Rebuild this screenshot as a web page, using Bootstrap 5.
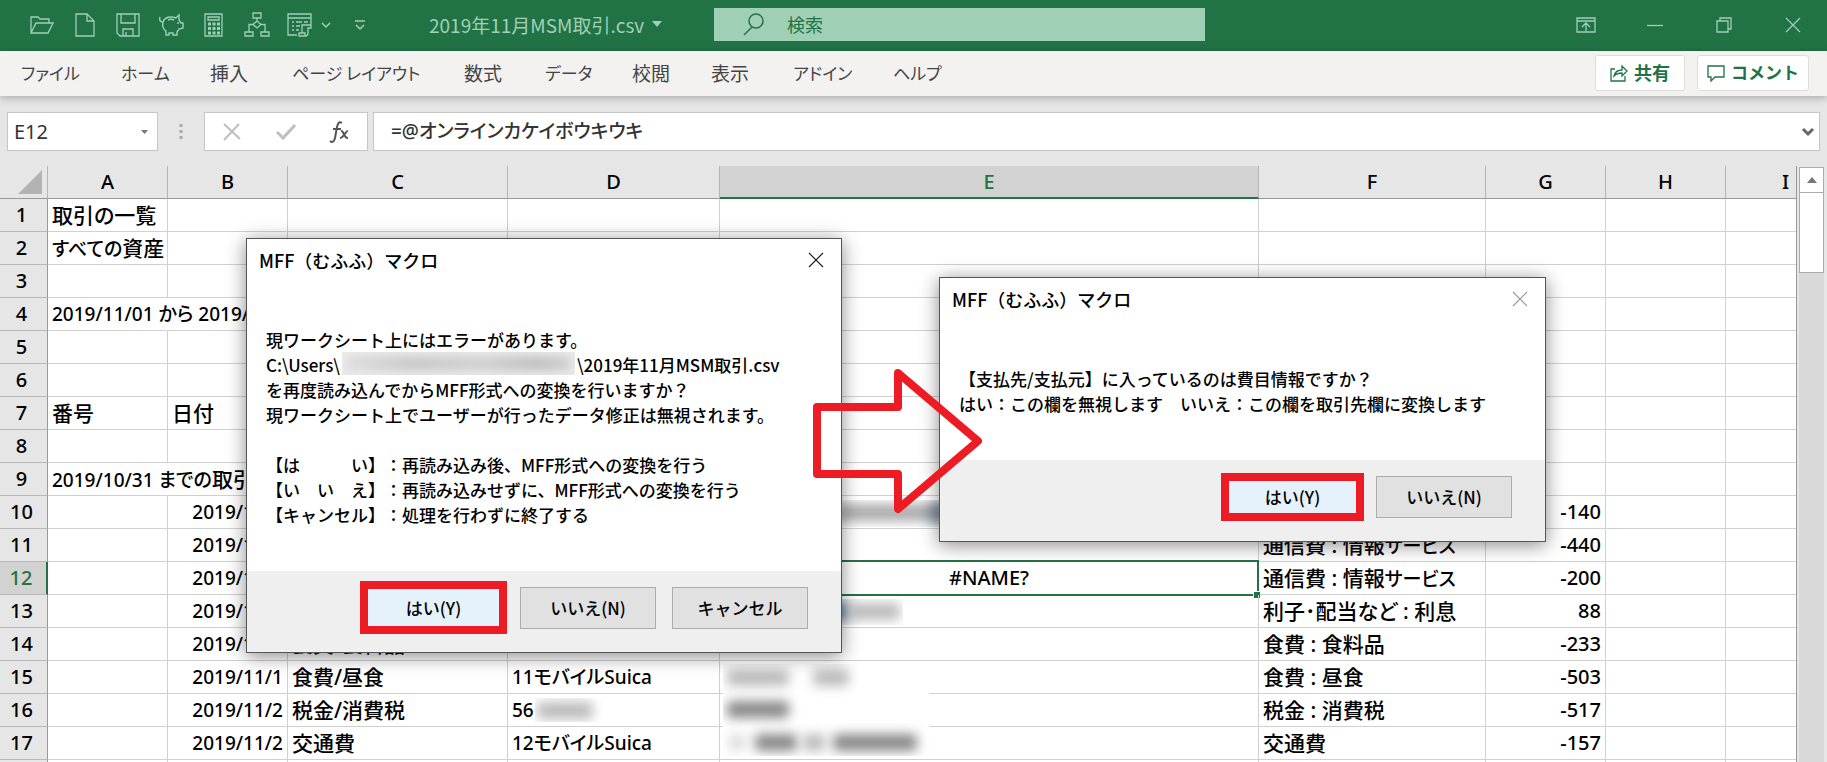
<!DOCTYPE html>
<html lang="ja">
<head>
<meta charset="utf-8">
<meta name="viewport" content="width=device-width, initial-scale=1">
<title>2019年11月MSM取引.csv</title>
<link href="https://cdn.jsdelivr.net/npm/bootstrap@5.3.0/dist/css/bootstrap.min.css" rel="stylesheet">
<script src="https://cdn.jsdelivr.net/npm/bootstrap@5.3.0/dist/js/bootstrap.bundle.min.js"></script>
<style>
:root{--xl:#217346;--mint:#9fd0b6;--line:#d0d0d0;--edge:#999}
body{font-family:"Noto Sans","Noto Sans CJK JP",sans-serif;font-feature-settings:"palt";font-size:20px;color:#000;background:#e6e6e6}
button{font-family:inherit}
svg{display:block;fill:none;stroke:currentColor;flex-shrink:0}
.titlebar{background:var(--xl);color:var(--mint);height:51px;padding-bottom:2px}
.tool{width:43px;height:49px;padding:0;border:0;background:none;color:inherit;display:flex;align-items:center;justify-content:center}
.tool.narrow{width:25px}
.tool.slim{width:10px}
.tool.wide{width:69px}
.quick{width:429px;padding-left:20px}
.docname{width:285px;font-family:"Noto Sans CJK JP",sans-serif;font-size:19px;line-height:24px;color:var(--mint)}
.search{background:var(--mint);height:33px;flex:0 1 491px;color:var(--xl);padding-left:29px}
.search input{background:none;border:0;outline:0;font-size:18px;line-height:24px;padding:0;margin-left:22px;color:var(--xl)}
.search input::placeholder{color:var(--xl);opacity:1}
.ribbon{background:#f3f2f1;height:45px;padding:0 18px 2px 21px;box-shadow:0 2px 8px #0004;z-index:1}
.tabs{display:grid;grid-template-columns:100px 89px 82px 172px 81px 87px 79px 82px 100px 60px;font-family:"Noto Sans CJK JP",sans-serif;font-size:19px;line-height:28px}
.tabs a{color:#444;text-decoration:none;white-space:nowrap}
.tabs .kana{font-size:17px}
.pill{height:36px;min-width:90px;border:1px solid #dedddc;border-radius:3px;background:#fff;color:var(--xl);font-size:18px;font-weight:700;line-height:24px;padding:0 8px;gap:6px;display:flex;align-items:center;justify-content:center;white-space:nowrap}
.pill.kana{font-size:17px;width:112px}
.formula{padding:16px 7px 15px}
.field{height:39px;background:#fff;border:1px solid #c6c6c6}
.namebox{width:151px;color:#777}
.namebox input{width:110px;border:0;outline:0;padding:0 0 0 6px;color:#333;font-size:20px}
.dots{width:46px;color:#aaa}
.fxgroup{width:164px;margin-right:5px}
.fxgroup button{flex:1;border:0;background:none;padding:0;display:flex;justify-content:center;color:#bfbfbf}
.fxgroup .fx{color:#555}
.fbar{color:#666}
.fbar input{border:0;outline:0;background:none;padding-left:17px;font-size:19px;font-weight:500;color:#333;font-feature-settings:"palt"}
.sheetwrap{min-height:0}
.sheet{overflow:hidden;border-right:1px solid var(--edge)}
.grid{table-layout:fixed;width:1707px;border-collapse:separate;border-spacing:0;background:#fff}
.grid th,.grid td{height:33px;padding:0 4px;border:0 solid var(--line);border-width:0 1px 1px 0;line-height:30px;white-space:nowrap;overflow:visible;vertical-align:middle}
.grid td{font-size:19px;font-weight:500}
.grid .num,.grid .err{font-size:20px}
.grid .num,.grid .day{text-align:right}
.grid i{font-style:normal;font-size:21px}
.grid .kana{font-size:19px}
.grid th{background:#e6e6e6;text-align:center;font-size:20px;font-weight:500}
.grid thead th{border-bottom-color:var(--edge);border-right-color:#b5b5b5}
.grid tbody th{border-right-color:var(--edge);border-bottom-color:#b9b9b9;padding:0 6px 0 2px}
.grid thead th.on{background:#d2d2d2;color:var(--xl);border-bottom:2px solid var(--xl)}
.grid tbody th.on{background:#d2d2d2;color:var(--xl);border-right:2px solid var(--xl)}
.grid .spill{border-right-color:#fff}
.corner{color:#b3b3b3}
.cursor{position:absolute;inset:-2px -1px -2px -2px;border:2px solid var(--xl)}
.cursor::after{content:"";position:absolute;right:-3px;bottom:-4px;width:7px;height:7px;background:var(--xl);border:1px solid #fff;border-width:1px 0 0 1px}
.hide{position:absolute;background:#fff;overflow:hidden}
.hide b{position:absolute;height:17px;background:#aaa;filter:blur(6px);border-radius:4px}
.vscroll{width:30px;padding:1px 3px 0 2px}
.vscroll button{height:26px;border:1px solid #ababab;background:#fff;padding:0;color:#777}
.thumb{height:81px;border:1px solid #ababab;background:#fff;margin-top:-1px}
.track{background:#d9d9d9}
/* floating message boxes on the sheet */
.msg{position:absolute;background:#fff;border:1px solid #555;box-shadow:0 3px 18px #0007;font-family:"Noto Sans CJK JP",sans-serif;font-feature-settings:normal;text-spacing-trim:space-all;font-size:17px;font-weight:500;line-height:25px;display:flex;flex-direction:column}
.msg-one{left:246px;top:238px;width:596px;height:415px}
.msg-two{left:939px;top:277px;width:607px;height:265px}
.msg header{font-size:18px;padding:9px 10px 0 12px;height:43px}
.msg p{margin:0;height:25px;white-space:pre}
.msg .say{padding:45px 19px 0;flex:1}
.msg .close{border:0;background:none;padding:4px 7px;height:24px;color:#222}
.msg-two .close{color:#999}
.smudge{display:inline-block;width:233px;height:23px;margin:0 2px;vertical-align:top;background:#ececec;overflow:hidden}
.smudge b{display:block;height:15px;margin:4px;background:linear-gradient(90deg,#ddd,#c8c8c8 30%,#d0d0d0 60%,#c0c0c0 85%,#d0d0d0);filter:blur(5px)}
.msg footer{background:#efefef;height:81px;display:flex;align-items:center;justify-content:flex-end;gap:16px;padding:0 33px 8px 0}
.msg footer button{width:136px;height:42px;border:1px solid #adadad;background:#e1e1e1;font:inherit;padding:0}
.msg footer .pick{width:147px;height:53px;border:8px solid #ed1c24;background:#e5f1fb;margin-right:-3px}
.msg-two footer .pick{width:143px;height:48px;margin-right:-4px}
.arrow{position:absolute;left:812px;top:368px;color:#ed1c24;stroke-width:8;stroke-linejoin:round}
</style>
</head>
<body class="vh-100 overflow-hidden d-flex flex-column position-relative">

<header class="titlebar d-flex align-items-center flex-shrink-0">
  <div class="quick d-flex">
    <button class="tool" aria-label="開く"><svg width="24" height="24" viewBox="0 0 24 24" stroke-width="1.3"><path d="M1 20V4h7l2 2h9v4M1 20L6 10h17l-5 10z"/></svg></button>
    <button class="tool" aria-label="新規"><svg width="24" height="26" viewBox="0 0 24 26" stroke-width="1.3"><path d="M3 2h11l7 7v15H3zM14 2v7h7"/></svg></button>
    <button class="tool" aria-label="保存"><svg width="24" height="24" viewBox="0 0 24 24" stroke-width="1.3"><path d="M1 1h22v22H4l-3-3zM5 1v9h14V1M7 23v-7h10v7M10 19v4"/></svg></button>
    <button class="tool" aria-label="貯金"><svg width="26" height="24" viewBox="0 0 26 24" stroke-width="1.4"><path d="M2 4c-1 3 0 5 3 5 1-3 4-5 8-5 2 0 3 0 5 1l3-3v5l2 3h2v5l-4 1-2 3v3h-4v-2h-4v2H8v-4c-3-2-4-5-3-9M10 7c2-1 4-1 6 0M20 9v2"/></svg></button>
    <button class="tool" aria-label="電卓"><svg width="20" height="26" viewBox="0 0 20 26" stroke-width="1.3"><path d="M1 2h17v22H1zM4 5h11v3H4z"/><path stroke-width="3" stroke-dasharray="3 1.5" d="M4 12h12M4 16.500h12M4 21h12"/></svg></button>
    <button class="tool" aria-label="組織図"><svg width="26" height="26" viewBox="0 0 26 26" stroke-width="1.3"><path d="M9 1h8v5H9zM13 6v3M13 9l4 3.500-4 3.500-4-3.500zM9 12.500H5V20M17 12.500h4V20M1 20h8v4H1zM17 20h8v4h-8z"/></svg></button>
    <button class="tool" aria-label="マクロ"><svg width="26" height="26" viewBox="0 0 26 26" stroke-width="1.3"><path d="M10 23H1V2h23v11M1 6h23M5 10h2M9 10h6M17 10h4M5 14h2M9 14h4M5 18h2M9 18h3M15 21v-8h9v3h-3v5c0 2-1 3-3 3h-6v-3h6v3"/></svg></button>
    <button class="tool slim" aria-label="マクロの一覧"><svg width="10" height="8" viewBox="0 0 10 8" stroke-width="1.5"><path d="M1 2l4 4 4-4"/></svg></button>
    <button class="tool narrow ms-3" aria-label="カスタマイズ"><svg width="12" height="12" viewBox="0 0 12 12" stroke-width="1.5"><path d="M1 2h10M2 6l4 4 4-4"/></svg></button>
  </div>
  <div class="docname d-flex align-items-center gap-2"><span>2019年11月MSM取引.csv</span><svg width="10" height="7" viewBox="0 0 10 7"><path fill="currentColor" stroke="none" d="M0 0h10L5 6z"/></svg></div>
  <label class="search d-flex align-items-center"><svg width="22" height="24" viewBox="0 0 22 24" stroke-width="1.500"><circle cx="13" cy="8" r="7"/><path d="M9 14L1 22"/></svg><input type="search" placeholder="検索" aria-label="検索"></label>
  <div class="d-flex ms-auto">
    <button class="tool wide" aria-label="リボンの表示"><svg width="20" height="16" viewBox="0 0 20 16" stroke-width="1.3"><path d="M1 1h18v14H1zM1 4h18M10 14V6M6 10l4-4 4 4"/></svg></button>
    <button class="tool wide" aria-label="最小化"><svg width="16" height="16" viewBox="0 0 16 16" stroke-width="1.3"><path d="M0 8.500h16"/></svg></button>
    <button class="tool wide" aria-label="元に戻す"><svg width="16" height="16" viewBox="0 0 16 16" stroke-width="1.3"><path d="M1 4h11v11H1zM4 4V1h11v11h-3"/></svg></button>
    <button class="tool wide" aria-label="閉じる"><svg width="16" height="16" viewBox="0 0 16 16" stroke-width="1.3"><path d="M1 1l14 14M15 1L1 15"/></svg></button>
  </div>
</header>

<nav class="ribbon d-flex align-items-center flex-shrink-0">
  <div class="tabs"><a class="kana" href="#">ファイル</a><a class="kana" href="#">ホーム</a><a href="#">挿入</a><a class="kana" href="#">ページ レイアウト</a><a href="#">数式</a><a class="kana" href="#">データ</a><a href="#">校閲</a><a href="#">表示</a><a class="kana" href="#">アドイン</a><a class="kana" href="#">ヘルプ</a></div>
  <div class="d-flex ms-auto gap-2">
    <button class="pill me-1"><svg width="18" height="18" viewBox="0 0 18 18" stroke-width="1.300"><path d="M5 5H1v12h14v-5M4 12c1-4 3-6 8-6V2l5 5-5 5V9c-4 0-6 1-8 3z"/></svg>共有</button>
    <button class="pill kana"><svg width="18" height="18" viewBox="0 0 18 18" stroke-width="1.300"><path d="M1 2h16v11H8l-4 4v-4H1z"/></svg>コメント</button>
  </div>
</nav>

<div class="formula d-flex flex-shrink-0">
  <div class="field namebox d-flex align-items-center"><input value="E12" aria-label="名前ボックス"><svg class="ms-auto me-2" width="9" height="6" viewBox="0 0 9 6"><path fill="currentColor" stroke="none" d="M1 1h7L4.500 5z"/></svg></div>
  <div class="dots d-flex align-items-center justify-content-center"><svg width="4" height="16" viewBox="0 0 4 16"><path stroke-width="3" stroke-dasharray="3 3" d="M2 0v16"/></svg></div>
  <div class="field fxgroup d-flex align-items-center">
    <button aria-label="キャンセル"><svg width="18" height="18" viewBox="0 0 18 18" stroke-width="2"><path d="M1 1l16 15M16 1L1 17"/></svg></button>
    <button aria-label="入力"><svg width="20" height="18" viewBox="0 0 20 18" stroke-width="3"><path d="M1 9l6 6L19 2"/></svg></button>
    <button class="fx" aria-label="関数の挿入"><svg width="22" height="24" viewBox="0 0 22 24" stroke-width="2"><path d="M13 3c-3-2-4 0-5 4L6 18c-1 4-3 5-5 3M4 9h8M12 11c3-1 3 8 7 7M19 11c-2-1-4 7-8 7"/></svg></button>
  </div>
  <div class="field fbar flex-grow-1 d-flex align-items-center"><input class="flex-grow-1" value="=@オンラインカケイボウキウキ" aria-label="数式バー"><svg class="me-1" width="14" height="10" viewBox="0 0 14 10" stroke-width="3"><path d="M2 2l5 5 5-5"/></svg></div>
</div>

<main class="sheetwrap d-flex flex-grow-1">
  <div class="sheet flex-grow-1">
    <table class="grid">
      <colgroup><col style="width:48px"><col style="width:120px"><col style="width:120px"><col style="width:220px"><col style="width:212px"><col style="width:539px"><col style="width:227px"><col style="width:120px"><col style="width:120px"><col style="width:120px"></colgroup>
      <thead><tr><th><svg class="corner ms-auto" width="26" height="26" viewBox="0 0 26 26"><path fill="currentColor" stroke="none" d="M25 1v24H1z"/></svg></th><th>A</th><th>B</th><th>C</th><th>D</th><th class="on">E</th><th>F</th><th>G</th><th>H</th><th>I</th></tr></thead>
      <tbody>
      <tr><th>1</th><td><i>取引の一覧</i></td><td></td><td></td><td></td><td></td><td></td><td></td><td></td><td></td></tr>
      <tr><th>2</th><td><i><span class="kana">すべての</span>資産</i></td><td></td><td></td><td></td><td></td><td></td><td></td><td></td><td></td></tr>
      <tr><th>3</th><td></td><td></td><td></td><td></td><td></td><td></td><td></td><td></td><td></td></tr>
      <tr><th>4</th><td class="spill">2019/11/01 から 2019/11/30</td><td></td><td></td><td></td><td></td><td></td><td></td><td></td><td></td></tr>
      <tr><th>5</th><td></td><td></td><td></td><td></td><td></td><td></td><td></td><td></td><td></td></tr>
      <tr><th>6</th><td></td><td></td><td></td><td></td><td></td><td></td><td></td><td></td><td></td></tr>
      <tr><th>7</th><td><i>番号</i></td><td><i>日付</i></td><td></td><td></td><td></td><td></td><td></td><td></td><td></td></tr>
      <tr><th>8</th><td></td><td></td><td></td><td></td><td></td><td></td><td></td><td></td><td></td></tr>
      <tr><th>9</th><td class="spill">2019/10/31 までの<i>取引</i></td><td></td><td></td><td></td><td></td><td></td><td></td><td></td><td></td></tr>
      <tr><th>10</th><td></td><td class="day">2019/11/1</td><td></td><td></td><td class="position-relative"><span class="hide" style="left:116px;top:4px;width:110px;height:27px"><b style="left:0;top:4px;width:104px"></b><b style="left:94px;top:4px;width:20px;background:#789"></b></span></td><td></td><td class="num">-140</td><td></td><td></td></tr>
      <tr><th>11</th><td></td><td class="day">2019/11/1</td><td></td><td></td><td></td><td><i>通信費 : 情報<span class="kana">サービス</span></i></td><td class="num">-440</td><td></td><td></td></tr>
      <tr><th class="on">12</th><td></td><td class="day">2019/11/1</td><td></td><td></td><td class="err position-relative text-center">#NAME?<span class="cursor"></span></td><td><i>通信費 : 情報<span class="kana">サービス</span></i></td><td class="num">-200</td><td></td><td></td></tr>
      <tr><th>13</th><td></td><td class="day">2019/11/1</td><td></td><td></td><td class="position-relative"><span class="hide" style="left:110px;top:4px;width:73px;height:26px"><b style="left:0;top:4px;width:18px;background:#579"></b><b style="left:18px;top:4px;width:52px;background:#bbb"></b></span></td><td><i>利子･配当など : 利息</i></td><td class="num">88</td><td></td><td></td></tr>
      <tr><th>14</th><td></td><td class="day">2019/11/1</td><td><i>食費/食料品</i></td><td>12モバイルSuica</td><td></td><td><i>食費 : 食料品</i></td><td class="num">-233</td><td></td><td></td></tr>
      <tr><th>15</th><td></td><td class="day">2019/11/1</td><td><i>食費/昼食</i></td><td>11モバイルSuica</td><td class="position-relative"><span class="hide" style="left:3px;top:3px;width:206px;height:92px"><b style="left:4px;top:5px;width:62px;background:#bbb"></b><b style="left:90px;top:5px;width:36px;background:#bbb"></b><b style="left:4px;top:37px;width:62px;background:#888"></b><b style="left:6px;top:70px;width:16px;background:#ddd"></b><b style="left:32px;top:70px;width:42px;background:#888"></b><b style="left:80px;top:70px;width:22px;background:#bbb"></b><b style="left:110px;top:70px;width:84px;background:#888"></b></span></td><td><i>食費 : 昼食</i></td><td class="num">-503</td><td></td><td></td></tr>
      <tr><th>16</th><td></td><td class="day">2019/11/2</td><td><i>税金/消費税</i></td><td class="position-relative">56<span class="hide" style="left:27px;top:4px;width:68px;height:24px"><b style="left:2px;top:4px;width:56px;background:#bbb"></b></span></td><td></td><td><i>税金 : 消費税</i></td><td class="num">-517</td><td></td><td></td></tr>
      <tr><th>17</th><td></td><td class="day">2019/11/2</td><td><i>交通費</i></td><td>12モバイルSuica</td><td></td><td><i>交通費</i></td><td class="num">-157</td><td></td><td></td></tr>
      <tr><th></th><td></td><td></td><td></td><td></td><td></td><td></td><td></td><td></td><td></td></tr>
      </tbody>
    </table>
  </div>
  <div class="vscroll d-flex flex-column flex-shrink-0">
    <button class="d-flex align-items-center justify-content-center" aria-label="上へ"><svg width="12" height="8" viewBox="0 0 12 8"><path fill="currentColor" stroke="none" d="M6 1l5 6H1z"/></svg></button>
    <div class="thumb"></div>
    <div class="track flex-grow-1"></div>
  </div>
</main>

<section class="msg msg-one" role="dialog" aria-label="MFF（むふふ）マクロ">
  <header class="d-flex justify-content-between"><span>MFF（むふふ）マクロ</span><button class="close" aria-label="閉じる"><svg width="16" height="16" viewBox="0 0 16 16" stroke-width="1.200"><path d="M1 1l14 14M15 1L1 15"/></svg></button></header>
  <div class="say"><p>現ワークシート上にはエラーがあります。</p><p>C:\Users\<span class="smudge"><b></b></span>\2019年11月MSM取引.csv</p><p>を再度読み込んでからMFF形式への変換を行いますか？</p><p>現ワークシート上でユーザーが行ったデータ修正は無視されます。</p><p> </p><p>【は　　　い】：再読み込み後、MFF形式への変換を行う</p><p>【い　い　え】：再読み込みせずに、MFF形式への変換を行う</p><p>【キャンセル】：処理を行わずに終了する</p></div>
  <footer><button class="pick">はい(Y)</button><button>いいえ(N)</button><button>キャンセル</button></footer>
</section>

<section class="msg msg-two" role="dialog" aria-label="MFF（むふふ）マクロ">
  <header class="d-flex justify-content-between"><span>MFF（むふふ）マクロ</span><button class="close" aria-label="閉じる"><svg width="16" height="16" viewBox="0 0 16 16" stroke-width="1.200"><path d="M1 1l14 14M15 1L1 15"/></svg></button></header>
  <div class="say"><p>【支払先/支払元】に入っているのは費目情報ですか？</p><p>はい：この欄を無視します　いいえ：この欄を取引先欄に変換します</p></div>
  <footer><button class="pick">はい(Y)</button><button>いいえ(N)</button></footer>
</section>

<svg class="arrow" width="172" height="146" viewBox="0 0 172 146"><path d="M5 39H86V5L166 73 86 141V106H5z"/></svg>
</body>
</html>
